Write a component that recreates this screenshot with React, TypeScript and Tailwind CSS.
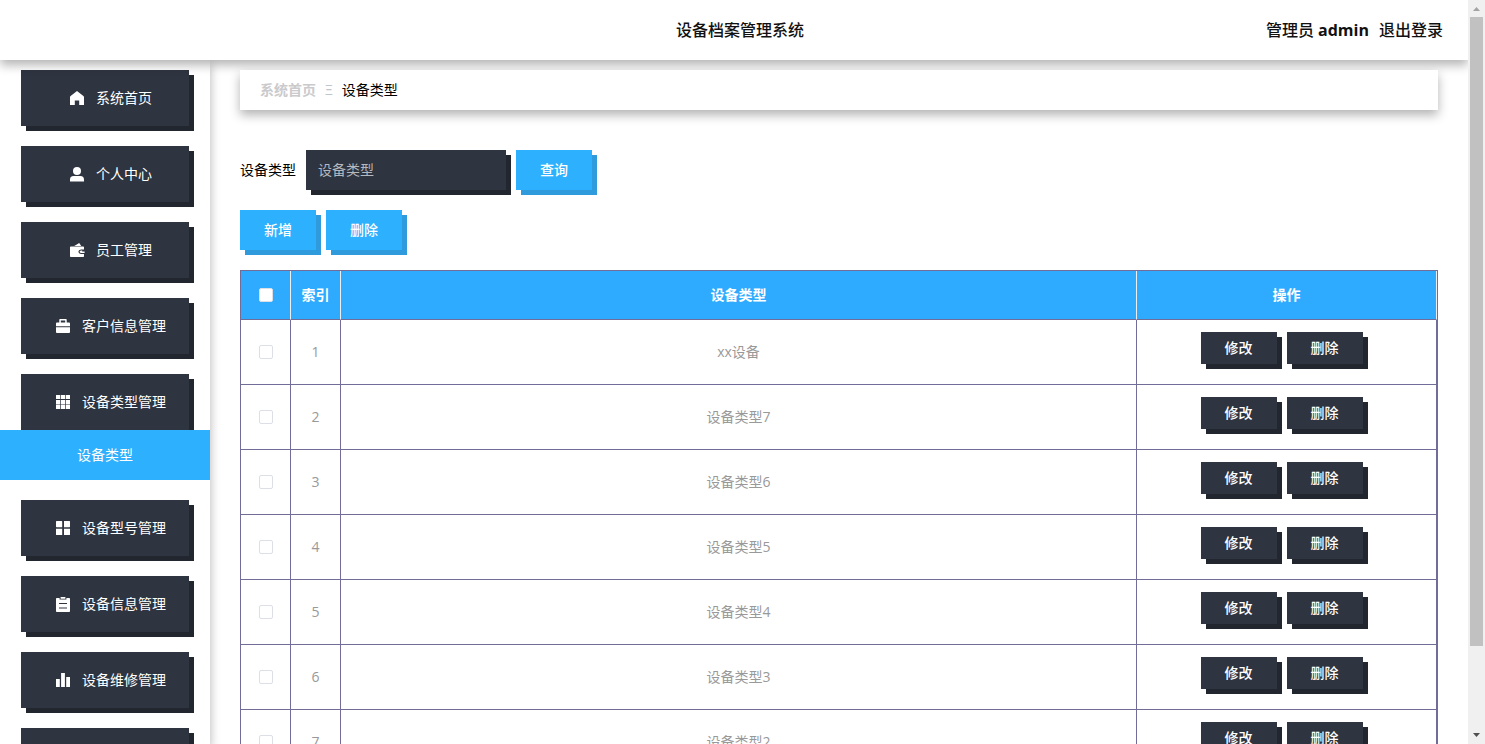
import type { ReactNode } from 'react';

const FONT = "font-['Open_Sans','Noto_Sans_CJK_SC',sans-serif]";

function Icon({ children }: { children: ReactNode }) {
  return (
    <svg viewBox="0 0 14 14" className="size-3.5 shrink-0 overflow-visible fill-white" aria-hidden="true">
      {children}
    </svg>
  );
}

const icons = {
  home: <path d="M7 0 L13.4 5 Q14 5.5 14 6.2 V14 H9.2 V9.6 H4.8 V14 H0 V6.2 Q0 5.5 .6 5Z" />,
  user: (
    <>
      <circle cx="7" cy="3.9" r="4" />
      <path d="M0 14.6 V12.8 Q0 9.1 3.6 9.1 H10.4 Q14 9.1 14 12.8 V14.6Z" />
    </>
  ),
  wallet: (
    <>
      <path d="M4.2 2.9 L9.2 0 L11.2 2.9Z" />
      <path
        fillRule="evenodd"
        d="M0 4.2 Q0 3.4 .8 3.4 H13.2 Q14 3.4 14 4.2 V6.4 H11 Q8.4 6.6 8.4 8.7 Q8.4 10.8 11 11 H14 V13.2 Q14 14 13.2 14 H.8 Q0 14 0 13.2Z"
      />
      <path d="M11 7.4 H12.2 V8.6 H14.6 V10 H11 Q9.6 9.8 9.6 8.7 Q9.6 7.6 11 7.4Z" />
    </>
  ),
  suitcase: (
    <>
      <path fillRule="evenodd" d="M3.3 4 V.7 Q3.3 0 4 0 H10 Q10.7 0 10.7 .7 V4 H9.2 V1.5 H4.8 V4Z" />
      <path d="M0 4.4 Q0 3.5 .9 3.5 H13.1 Q14 3.5 14 4.4 V7.3 H0Z M0 8.3 H14 V13.1 Q14 14 13.1 14 H.9 Q0 14 0 13.1Z" />
    </>
  ),
  grid: (
    <path d="M0 0H4.2V4H0Z M4.9 0H9.1V4H4.9Z M9.8 0H14V4H9.8Z M0 5H4.2V9.4H0Z M4.9 5H9.1V9.4H4.9Z M9.8 5H14V9.4H9.8Z M0 10H4.2V14H0Z M4.9 10H9.1V14H4.9Z M9.8 10H14V14H9.8Z" />
  ),
  menu: (
    <path d="M.6 0H5.6Q6.2 0 6.2 .6V6.2H.6Q0 6.2 0 5.6V.6Q0 0 .6 0Z M8 0H13.4Q14 0 14 .6V5.6Q14 6.2 13.4 6.2H8Z M0 7.8H6.2V14H.6Q0 14 0 13.4Z M8 7.8H14V13.4Q14 14 13.4 14H8Z" />
  ),
  order: (
    <path
      fillRule="evenodd"
      d="M.8 1H3.6V2.6H10.4V1H13.2Q14 1 14 1.8V14.2Q14 15 13.2 15H.8Q0 15 0 14.2V1.8Q0 1 .8 1Z M4.6 0H9.4V1.8H4.6Z M3 6V7H11V6Z M3 10.6V11.6H11V10.6Z"
    />
  ),
  data: <path d="M0 6H3.8V14H0Z M5.1 0H8.9V14H5.1Z M10.2 4H14V14H10.2Z" />,
};

type MenuItem = { label: string; icon: keyof typeof icons; child?: string };

const menu: MenuItem[] = [
  { label: '系统首页', icon: 'home' },
  { label: '个人中心', icon: 'user' },
  { label: '员工管理', icon: 'wallet' },
  { label: '客户信息管理', icon: 'suitcase' },
  { label: '设备类型管理', icon: 'grid', child: '设备类型' },
  { label: '设备型号管理', icon: 'menu' },
  { label: '设备信息管理', icon: 'order' },
  { label: '设备维修管理', icon: 'data' },
  { label: '', icon: 'suitcase' },
];

const rows = ['xx设备', '设备类型7', '设备类型6', '设备类型5', '设备类型4', '设备类型3', '设备类型2'];

function BlueButton({ children }: { children: ReactNode }) {
  return (
    <button type="button" className="h-10 w-[76px] bg-[#2db0fd] font-medium text-white shadow-[5px_5px_0_#2f9bdd]">
      {children}
    </button>
  );
}

function DarkButton({ children }: { children: ReactNode }) {
  return (
    <button type="button" className="h-8 w-[76px] bg-[#2e3440] font-medium text-white shadow-[5px_5px_0_#22262f]">
      {children}
    </button>
  );
}

function CheckBox({ label }: { label: string }) {
  return (
    <input
      type="checkbox"
      aria-label={label}
      className="mx-auto block size-3.5 appearance-none rounded-xs border border-[#dcdfe6] bg-white checked:bg-[#2db0fd]"
    />
  );
}

function Sidebar() {
  return (
    <nav className="w-[210px] shrink-0 overflow-hidden bg-white shadow-[0_5px_10px_rgba(0,0,0,0.3)]">
      <ul className="flex flex-col gap-5 pt-2.5">
        {menu.map((item) => (
          <li key={item.label}>
            <a
              href="#"
              className="mx-[21px] flex h-14 items-center justify-center gap-3 bg-[#2e3440] pl-3 text-white shadow-[5px_5px_0_#22262f]"
            >
              <Icon>{icons[item.icon]}</Icon>
              {item.label}
            </a>
            {item.child && (
              <a href="#" className="flex h-[50px] items-center justify-center bg-[#2db0fd] text-white">
                {item.child}
              </a>
            )}
          </li>
        ))}
      </ul>
    </nav>
  );
}

function TypeTable() {
  const head = 'border-r border-b border-r-[#ebeef5] border-b-[#716c98] font-bold';
  const cell = 'border-r border-b border-[#716c98]';
  return (
    <div className="border-x border-t border-[#716c98]">
      <table className="w-full table-fixed border-separate border-spacing-0 text-center">
        <colgroup>
          <col className="w-[50px]" />
          <col className="w-[50px]" />
          <col />
          <col className="w-[300px]" />
        </colgroup>
        <thead className="bg-[#2eabff] text-white">
          <tr className="h-[49px]">
            <th className={head}>
              <CheckBox label="全选" />
            </th>
            <th className={head}>索引</th>
            <th className={head}>设备类型</th>
            <th className={head}>操作</th>
          </tr>
        </thead>
        <tbody className="text-[#999]">
          {rows.map((name, i) => (
            <tr key={name} className="h-[65px]">
              <td className={cell}>
                <CheckBox label={name} />
              </td>
              <td className={cell}>{i + 1}</td>
              <td className={cell}>{name}</td>
              <td className="border-r border-b border-[#716c98] pt-3 align-top">
                <div className="flex justify-center gap-2.5 pr-2.5">
                  <DarkButton>修改</DarkButton>
                  <DarkButton>删除</DarkButton>
                </div>
              </td>
            </tr>
          ))}
        </tbody>
      </table>
    </div>
  );
}

function ScrollTrack() {
  return (
    <div className="flex w-[17px] shrink-0 flex-col items-center bg-[#f0f0f0]" aria-hidden="true">
      <svg viewBox="0 0 17 17" className="size-[17px] shrink-0 fill-[#a3a3a3]">
        <path d="M5 11H12L8.5 7Z" />
      </svg>
      <div className="w-[13px] grow-[629] basis-0 bg-[#c1c1c1]" />
      <div className="grow-[81] basis-0" />
      <svg viewBox="0 0 17 17" className="size-[17px] shrink-0 fill-[#505050]">
        <path d="M5 6H12L8.5 10Z" />
      </svg>
    </div>
  );
}

export default function App() {
  return (
    <div className={`flex h-screen overflow-hidden bg-white text-sm text-black ${FONT}`}>
      <div className="flex min-w-0 flex-1 flex-col overflow-hidden">
        <header className="relative grid h-[60px] shrink-0 grid-cols-[1fr_auto_1fr] items-center bg-white px-[25px] text-base font-medium text-[#111] shadow-[0_5px_10px_rgba(0,0,0,0.3)]">
          <h1 className="col-start-2 pl-3">设备档案管理系统</h1>
          <div className="flex justify-end gap-2.5">
            <span>
              管理员 <b className="font-bold">admin</b>
            </span>
            <button type="button">退出登录</button>
          </div>
        </header>
        <div className="flex min-h-0 flex-1">
          <Sidebar />
          <main className="min-w-0 flex-1 overflow-y-auto px-[30px] pt-2.5 [scrollbar-width:none]">
            <div className="relative flex h-10 items-center gap-[9px] bg-white px-5 shadow-[0_5px_10px_rgba(0,0,0,0.3)]">
              <a href="#" className="font-bold text-[#cacacc]">
                系统首页
              </a>
              <span className="text-[#c0c4cc]">Ξ</span>
              <span>设备类型</span>
            </div>
            <form className="mt-10 flex items-center gap-2.5" onSubmit={(e) => e.preventDefault()}>
              <label htmlFor="type-name">设备类型</label>
              <input
                id="type-name"
                placeholder="设备类型"
                className="h-10 w-[200px] bg-[#2e3440] px-3 pb-0.5 text-white shadow-[5px_5px_0_#22262f] outline-none placeholder:text-[#b4b8bf]"
              />
              <BlueButton>查询</BlueButton>
            </form>
            <div className="my-5 flex gap-2.5">
              <BlueButton>新增</BlueButton>
              <BlueButton>删除</BlueButton>
            </div>
            <TypeTable />
          </main>
        </div>
      </div>
      <ScrollTrack />
    </div>
  );
}
